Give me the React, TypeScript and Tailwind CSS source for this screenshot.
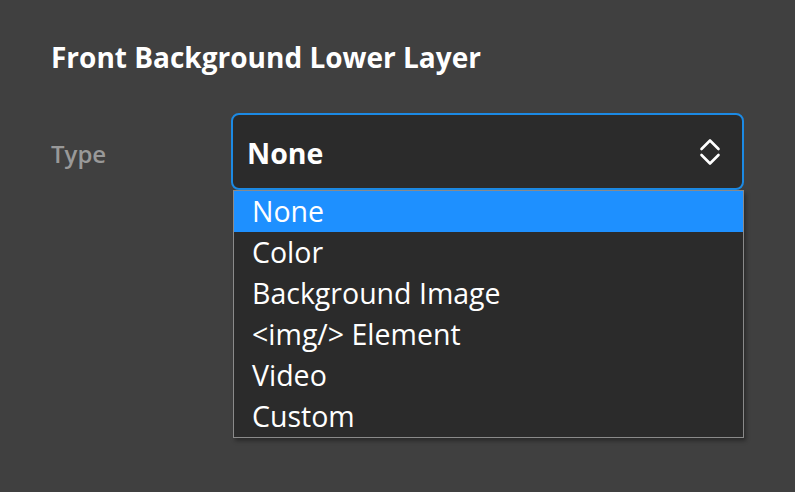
const options = ["None", "Color", "Background Image", "<img/> Element", "Video", "Custom"];

function Chevrons() {
  return (
    <svg width="24" height="32" viewBox="0 0 24 32" fill="none" stroke="white" strokeWidth="2.6" strokeLinecap="round" strokeLinejoin="round">
      <polyline points="3.5,13 12,4.5 20.5,13" />
      <polyline points="3.5,19 12,27.5 20.5,19" />
    </svg>
  );
}

export default function App() {
  const selected = "None";
  return (
    <div className="h-[492px] w-full bg-[#404040] pl-[51px] pt-[43px] font-['Open_Sans',sans-serif] text-white">
      <h2 className="text-[28px] font-bold leading-[28px]">Front Background Lower Layer</h2>

      <div className="mt-[42px] flex items-center">
        <span className="w-[180px] pt-[4px] text-[24px] font-semibold leading-[24px] text-[#999999]">Type</span>

        <div className="relative">
          <button
            type="button"
            className="flex h-[77px] w-[513px] items-center justify-between rounded-[8px] border-2 border-[#1c8ae4] bg-[#2b2b2b] pl-[14px] pr-[20px]"
          >
            <span className="pt-[3px] text-[28.5px] font-bold leading-[28px]">{selected}</span>
            <Chevrons />
          </button>

          <ul className="absolute left-[2px] top-full w-[511px] border border-[#8a8a8a] bg-[#2b2b2b] shadow-[2px_3px_4px_rgba(0,0,0,0.35)]">
            {options.map((opt) => (
              <li
                key={opt}
                className={`h-[41px] pl-[18px] text-[28.5px] leading-[41px] ${opt === selected ? "bg-[#1e90ff]" : ""}`}
              >
                {opt}
              </li>
            ))}
          </ul>
        </div>
      </div>
    </div>
  );
}
